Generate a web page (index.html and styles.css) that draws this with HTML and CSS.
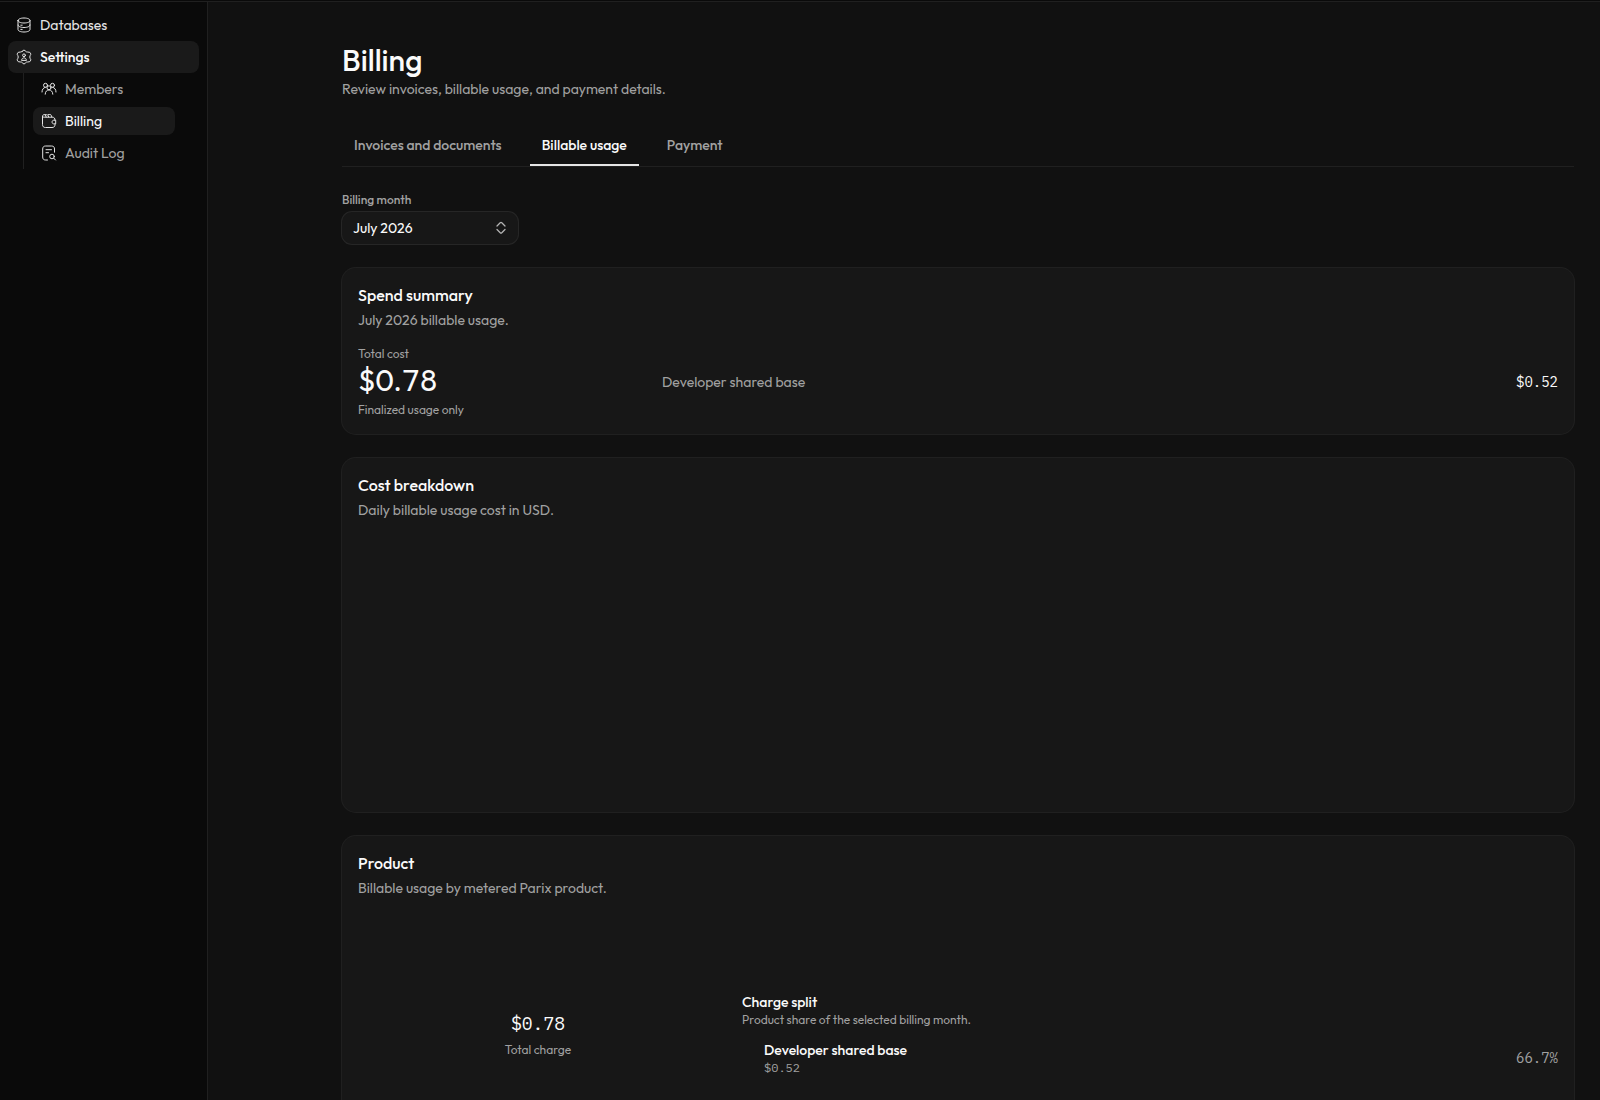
FILE: index.html
```html
<!DOCTYPE html>
<html lang="en">
  <head>
    <meta charset="utf-8">
    <title>Billing</title>
    <link rel="stylesheet" href="styles.css">
  </head>
  <body>
    <aside class="sidebar">
      <nav>
        <a class="nav-item" href="#databases">
          <svg class="icon" viewBox="0 0 16 16"><path d="M2 3.500C2 2 4.600 1 8 1s6 1 6 2.500S11.400 6 8 6 2 5 2 3.500zM2 3.500v9C2 14 4.600 15 8 15s6-1 6-2.500v-9M2 8c0 1.500 2.600 2.500 6 2.500s6-1 6-2.500M4.800 8.200h1.400M4.800 12.400h1.400"/></svg>
          Databases
        </a>
        <a class="nav-item active" href="#settings">
          <svg class="icon" viewBox="0 0 16 16"><path d="M6.300 2.200Q8-.400 9.700 2.200 10.300 3.100 11.400 3q3-.300 3.400 1.900.100.800-.600 1.600-.900 1.500 0 3 .700.800.600 1.600-.400 2.200-3.400 1.900-1.100-.100-1.700.800Q8 16.400 6.300 13.800 5.700 12.900 4.600 13q-3 .300-3.400-1.900-.100-.800.600-1.600.900-1.500 0-3-.700-.800-.600-1.600Q1.600 2.700 4.600 3q1.100.100 1.700-.800z"/><circle cx="8" cy="6.300" r="1.400"/><path d="M5.600 11c.300-3 4.500-3 4.800 0z"/></svg>
          Settings
        </a>
        <div class="subnav">
          <a class="nav-item sub" href="#members">
            <svg class="icon" viewBox="0 0 16 16"><circle cx="4.500" cy="4.300" r="2"/><circle cx="11.500" cy="4.300" r="2"/><circle cx="8" cy="6.800" r="2"/><path d="M4.200 13.200c0-5.800 7.600-5.800 7.600 0M1 11c0-2.600 1.300-4.300 3.300-4.700M15 11c0-2.600-1.300-4.300-3.300-4.700"/></svg>
            Members
          </a>
          <a class="nav-item sub current" href="#billing">
            <svg class="icon" viewBox="0 0 16 16"><path d="M14 7.200c0-2-.800-3-2.800-3H3.200C2 4.200 1.500 3.700 1.500 3v8.500c0 2 1 3 3 3H11c2 0 3-1 3-3v-.600M1.500 3.200c0-1 .700-1.500 1.500-1.500h1.300l.900 2.300M4.500 1.700h1.200q1.300 0 1.600 1.100L7.600 4M7.500 1.500h1.300q1.300 0 1.600 1.100l.4 1.400M14.300 7.200h-1.500c-2.300 0-2.300 3.700 0 3.700h1.500z"/></svg>
            Billing
          </a>
          <a class="nav-item sub" href="#audit-log">
            <svg class="icon" viewBox="0 0 16 16"><path d="M13.500 7.200V4c0-2-1-3-3-3H4.700c-2 0-3 1-3 3v8c0 2 1 3 3 3h1.800M5 4.700h5.500M5 7.700h2.500"/><circle cx="11" cy="11.500" r="2.300"/><path d="M12.700 13.200l1.800 1.800"/></svg>
            Audit Log
          </a>
        </div>
      </nav>
    </aside>

    <main class="main">
      <header class="page-header">
        <h1>Billing</h1>
        <p>Review invoices, billable usage, and payment details.</p>
      </header>

      <div class="tabs" role="tablist">
        <button class="tab" role="tab" type="button">Invoices and documents</button>
        <button class="tab selected" role="tab" type="button" aria-selected="true">Billable usage</button>
        <button class="tab" role="tab" type="button">Payment</button>
      </div>

      <div class="field">
        <label for="month">Billing month</label>
        <div class="select">
          <select id="month">
            <option>July 2026</option>
          </select>
          <svg class="chevrons" viewBox="0 0 16 16"><path d="M4 6 7.200 2.800q.8-.8 1.600 0L12 6M4 9.500l3.200 3.200q.8.8 1.600 0L12 9.500"/></svg>
        </div>
      </div>

      <div class="cards">
        <section class="card">
          <h2>Spend summary</h2>
          <p class="desc">July 2026 billable usage.</p>
          <div class="summary">
            <div class="total">
              <span class="small">Total cost</span>
              <strong>$0.78</strong>
              <span class="small">Finalized usage only</span>
            </div>
            <div class="line">
              <span class="muted">Developer shared base</span>
              <span class="mono">$0.52</span>
            </div>
          </div>
        </section>

        <section class="card">
          <h2>Cost breakdown</h2>
          <p class="desc">Daily billable usage cost in USD.</p>
          <div class="chart"></div>
        </section>

        <section class="card">
          <h2>Product</h2>
          <p class="desc">Billable usage by metered Parix product.</p>
          <div class="product">
            <div class="donut">
              <span class="mono amount">$0.78</span>
              <span class="small">Total charge</span>
            </div>
            <div class="split">
              <h3>Charge split</h3>
              <p class="small">Product share of the selected billing month.</p>
              <div class="line split-row">
                <div class="split-name">
                  <h3>Developer shared base</h3>
                  <span class="mono small">$0.52</span>
                </div>
                <span class="mono muted">66.7%</span>
              </div>
            </div>
          </div>
        </section>
      </div>
    </main>
  </body>
</html>
```
FILE: styles.css
```css
* {
  box-sizing: border-box;
}
html {
  background-color: #0a0a0a;
}
body {
  display: flex;
  height: calc(100vh - 1px);
  margin: 1px 0 0;
  border-top: 1px solid #202020;
  background-color: #111111;
  color: #fafafa;
  font-family: Outfit, Lato, sans-serif;
  font-size: 14px;
  line-height: 20px;
}
h1, h2, h3, p {
  margin: 0;
}
.sidebar {
  flex: none;
  width: 208px;
  padding: 7px 8px;
  border-right: 1px solid #202020;
  background-color: #0a0a0a;
}
.nav-item {
  display: flex;
  align-items: center;
  gap: 8px;
  height: 32px;
  padding: 0 8px;
  border-radius: 8px;
  color: #e5e5e5;
  text-decoration: none;
}
.nav-item.active {
  background-color: #1a1a1a;
  color: #fafafa;
  font-weight: 500;
}
.icon {
  flex: none;
  width: 16px;
  height: 16px;
  fill: none;
  stroke: #e5e5e5;
  stroke-linecap: round;
  stroke-linejoin: round;
}
.subnav {
  display: flex;
  flex-direction: column;
  gap: 4px;
  margin-left: 15px;
  padding: 2px 24px 2px 9px;
  border-left: 1px solid #202020;
}
.nav-item.sub {
  height: 28px;
  color: #a1a1a1;
}
.nav-item.current {
  background-color: #1a1a1a;
  color: #fafafa;
}
.main {
  flex: 1;
  overflow-y: auto;
  scrollbar-width: none;
  padding: 41px 26px 24px 134px;
}
.page-header h1 {
  margin-bottom: 2px;
  font-size: 30px;
  font-weight: 500;
  line-height: 34px;
}
.page-header p {
  color: #a1a1a1;
}
.tabs {
  display: flex;
  gap: 16px;
  margin-top: 24px;
  border-bottom: 1px solid #202020;
}
.tab {
  height: 43px;
  padding: 2px 12px 0;
  border: none;
  border-bottom: 2px solid transparent;
  background: none;
  color: #a1a1a1;
  font: inherit;
  font-weight: 500;
  cursor: pointer;
}
.tab.selected {
  border-bottom-color: #e5e5e5;
  color: #fafafa;
}
.field {
  width: 176px;
  margin: 25px 0 24px;
}
.field label {
  display: block;
  margin-bottom: 4px;
  color: #a1a1a1;
  font-size: 12px;
  font-weight: 500;
  line-height: 16px;
}
.select {
  position: relative;
}
.select select {
  width: 100%;
  height: 32px;
  padding: 0 11px;
  border: none;
  border-radius: 10px;
  background-color: #171717;
  box-shadow: 0 0 0 1px #262626;
  color: #fafafa;
  font: inherit;
  appearance: none;
}
.chevrons {
  position: absolute;
  top: 8px;
  right: 9px;
  width: 16px;
  height: 16px;
  fill: none;
  stroke: #b4b4b4;
  stroke-width: 1.25;
  stroke-linecap: round;
  pointer-events: none;
}
.cards {
  display: grid;
  gap: 24px;
}
.card {
  padding: 16px;
  border-radius: 14px;
  background-color: #171717;
  box-shadow: 0 0 0 1px #202020;
}
.card h2 {
  font-size: 16px;
  font-weight: 500;
  line-height: 22px;
}
.card h3 {
  font-size: 14px;
  font-weight: 500;
}
.desc {
  margin: 4px 0 16px;
  color: #a1a1a1;
}
.small {
  color: #a1a1a1;
  font-size: 12px;
  line-height: 16px;
}
.muted {
  color: #a1a1a1;
}
.mono {
  font-family: "IBM Plex Mono", "DejaVu Sans Mono", monospace;
}
.summary {
  display: grid;
  grid-template-columns: 280px 1fr;
  align-items: center;
  gap: 24px;
}
.total {
  display: grid;
}
.total strong {
  margin-bottom: 4px;
  font-size: 30px;
  font-weight: 400;
  font-variant-numeric: tabular-nums;
  line-height: 36px;
}
.line {
  display: flex;
  align-items: center;
  justify-content: space-between;
}
.chart {
  height: 260px;
}
.product {
  display: grid;
  grid-template-columns: 360px 1fr;
  align-items: center;
  gap: 24px;
}
.donut {
  display: flex;
  flex-direction: column;
  align-items: center;
  justify-content: center;
  gap: 4px;
  height: 240px;
}
.amount {
  font-size: 18px;
  line-height: 28px;
}
.split-row {
  margin-top: 12px;
}
.split-name {
  display: grid;
  padding-left: 22px;
}
```
